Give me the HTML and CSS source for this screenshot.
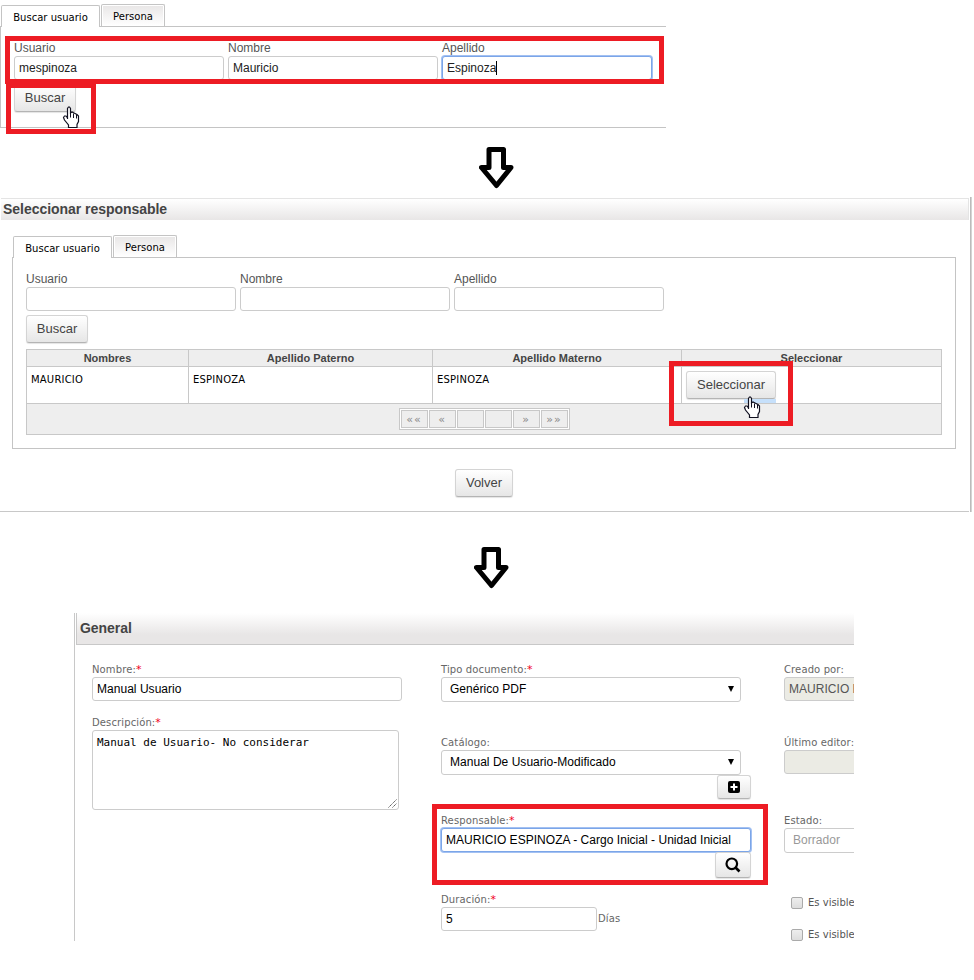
FILE: index.html
```html
<!DOCTYPE html>
<html lang="es">
<head>
<meta charset="utf-8">
<title>Seleccionar responsable</title>
<link rel="stylesheet" href="styles.css">
</head>
<body>
<svg class="defs" width="0" height="0">
  <symbol id="hand" viewBox="0 0 18 23">
    <path d="M5.500 13V2.500L6.500 1H7.500L8.500 2.500V7L10 6L12 7L13 7.500L15 8.500L16.500 10V15.500L15 18.500V21.500H6.500V19L2.500 14L1.500 11.500L2.500 10H4L5.500 12" fill="#fff" stroke="#101020" stroke-width="1.200"/>
    <path d="M8.500 7V11.500M11.500 7.500V12M14.500 8.500V12.500" stroke="#101020" fill="none"/>
  </symbol>
  <symbol id="arrow" viewBox="0 0 36 42">
    <path d="M10 2.500H24.500V20.500H32L17.500 38.500L2.500 20.500H10Z" fill="#fff" stroke="#000" stroke-width="5" stroke-linejoin="round"/>
  </symbol>
</svg>
<main class="page">
  <section class="search">
    <div class="tabs"><div class="tab active">Buscar usuario</div><div class="tab">Persona</div></div>
    <div class="panel">
      <div class="fields">
        <label>Usuario<span class="input">mespinoza</span></label>
        <label>Nombre<span class="input">Mauricio</span></label>
        <label>Apellido<span class="input focus">Espinoza<i class="caret"></i></span></label>
      </div>
      <span class="button">Buscar</span>
    </div>
    <div class="mark mark-fields"></div>
    <div class="mark mark-search"></div>
    <svg class="hand hand-search"><use href="#hand"/></svg>
  </section>
  <svg class="arrow first"><use href="#arrow"/></svg>
  <section class="dialog">
    <h2>Seleccionar responsable</h2>
    <div class="dialog-body">
      <div class="tabs"><div class="tab active">Buscar usuario</div><div class="tab">Persona</div></div>
      <div class="panel">
        <div class="fields">
          <label>Usuario<span class="input"></span></label>
          <label>Nombre<span class="input"></span></label>
          <label>Apellido<span class="input"></span></label>
        </div>
        <span class="button">Buscar</span>
        <div class="table">
          <div class="th">Nombres</div><div class="th">Apellido Paterno</div><div class="th">Apellido Materno</div><div class="th">Seleccionar</div>
          <div class="td">MAURICIO</div><div class="td">ESPINOZA</div><div class="td">ESPINOZA</div><div class="td pick"><span class="button wide">Seleccionar</span></div>
          <div class="foot"><div class="pager"><span>««</span><span>«</span><span></span><span></span><span>»</span><span>»»</span></div></div>
        </div>
      </div>
      <span class="button back">Volver</span>
    </div>
    <div class="glow"></div>
    <div class="mark mark-pick"></div>
    <svg class="hand hand-pick"><use href="#hand"/></svg>
  </section>
  <svg class="arrow second"><use href="#arrow"/></svg>
  <section class="general">
    <h2>General</h2>
    <div class="form">
      <div class="col">
        <div class="field f1"><div class="cap">Nombre:<b>*</b></div><span class="input w310">Manual Usuario</span></div>
        <div class="field"><div class="cap">Descripción:<b>*</b></div><div class="area">Manual de Usuario- No considerar<svg class="grip" viewBox="0 0 9 9"><path d="M0.500 8.500L8.500 0.500M4.500 8.500L8.500 4.500" stroke="#555" stroke-dasharray="1.400 .6"/></svg></div></div>
      </div>
      <div class="col">
        <div class="field f2"><div class="cap">Tipo documento:<b>*</b></div><div class="select">Genérico PDF<i class="tri"></i></div></div>
        <div class="field f3"><div class="cap">Catálogo:</div><div class="select">Manual De Usuario-Modificado<i class="tri"></i></div>
          <span class="button icon plus"><svg width="12" height="12" viewBox="0 0 12 12"><rect width="12" height="12" rx="2"/><path d="M6 2.500V9.500M2.500 6H9.500" stroke="#fff" stroke-width="2"/></svg></span></div>
        <div class="field f4"><div class="cap">Responsable:<b>*</b></div><span class="input focus w310">MAURICIO ESPINOZA - Cargo Inicial - Unidad Inicial</span>
          <span class="button icon lens"><svg width="16" height="16" viewBox="0 0 16 16"><circle cx="6.800" cy="6.800" r="5.300" fill="none" stroke="#000" stroke-width="2.200"/><path d="M10.500 10.500L14.500 14.500" stroke="#000" stroke-width="2.600"/></svg></span></div>
        <div class="field"><div class="cap">Duración:<b>*</b></div><div class="inline"><span class="input w156">5</span><span class="cap unit">Días</span></div></div>
      </div>
      <div class="col last">
        <div class="field g1"><div class="cap">Creado por:</div><span class="input disabled w310">MAURICIO ESPINOZA</span></div>
        <div class="field g2"><div class="cap">Último editor:</div><span class="input disabled w310"></span></div>
        <div class="field g3"><div class="cap">Estado:</div><div class="select muted">Borrador</div></div>
        <div class="check"><i></i>Es visible</div>
        <div class="check"><i></i>Es visible</div>
      </div>
    </div>
    <div class="mark mark-resp"></div>
  </section>
</main>
</body>
</html>
```
FILE: styles.css
```css
* { box-sizing: border-box; }
body { margin: 0; background: #fff; font: 12px/15px "Liberation Sans", Arial, sans-serif; color: #555; }
.defs { position: absolute; }
.page { width: 974px; height: 980px; overflow: hidden; display: flex; flex-direction: column; }
section { position: relative; flex: none; }
.search { width: 666px; height: 143px; padding-top: 4px; }
.tabs { display: flex; align-items: flex-end; gap: 1px; height: 23px; padding-left: 1px; margin-bottom: -1px; position: relative; }
.tab { width: 64px; height: 22px; align-self: flex-start; border: 1px solid #c4c4c4; border-bottom: 0; border-radius: 2px 2px 0 0; box-shadow: inset 0 0 0 1px #fff; background: linear-gradient(#e8e6e6, #fff); color: #000; font: 10px/24px "DejaVu Sans", sans-serif; letter-spacing: .02px; text-align: center; white-space: nowrap; }
.tab.active { width: 99px; height: 22px; align-self: flex-end; background: #fff; }
.panel { border: 1px solid #c4c4c4; padding: 14px 13px 13px; }
.search .panel { border-right: 0; height: 102px; }
.fields { display: flex; gap: 4px; margin-bottom: 4px; }
.fields label { display: block; width: 210px; }
.input { display: block; width: 210px; height: 24px; padding: 0 4px; border: 1px solid #ccc; border-radius: 3px; background: #fff; color: #222; font-size: 12px; line-height: 22px; white-space: nowrap; overflow: hidden; }
.input.focus { border-color: #7ba5e8; box-shadow: 0 0 0 1px #a3c1f2; }
.caret { display: inline-block; width: 1px; height: 14px; background: #000; vertical-align: -3px; }
.button { display: block; width: 62px; height: 28px; border: 1px solid #d4d4d4; border-bottom-color: #b4b4b4; border-radius: 3px; background: linear-gradient(#fff, #e6e6e6); box-shadow: 0 1px 1px #e4e4e4; color: #444; font-size: 13px; line-height: 25px; text-align: center; }
.mark { position: absolute; border: 5px solid #ed1c24; }
.mark-fields { left: 5px; top: 36px; width: 659px; height: 48px; }
.mark-search { left: 6px; top: 83px; width: 90px; height: 51px; }
.hand { position: absolute; width: 18px; height: 23px; }
.hand-search { left: 62px; top: 106px; }
.arrow { display: block; width: 36px; height: 42px; flex: none; }
.arrow.first { margin: 4px 0 0 479px; }
.dialog { width: 974px; height: 315px; margin-top: 8px; padding: 1px 5px 0 1px; }
.dialog::after { content: ""; position: absolute; left: 970px; top: 0; width: 2px; height: 315px; background: linear-gradient(90deg, #bbb 50%, #d4d4d4 50%); }
h2 { margin: 0; color: #444; font-size: 14px; font-weight: bold; letter-spacing: -.04px; }
.dialog h2 { height: 22px; padding-left: 2px; border-top: 1px solid #e4e4e4; border-right: 1px solid #e4e4e4; background: linear-gradient(#fff, #e8e6e6); line-height: 21px; }
.dialog-body { margin-left: -1px; height: 292px; padding: 15px 13px 0 12px; border-bottom: 1px solid #c8c8c8; }
.table { display: grid; grid-template-columns: 162px 244px 249px 260px; grid-template-rows: 17px 37px 31px; margin-top: 6px; width: 916px; border: solid #c8c8c8; border-width: 1px 0 0 1px; }
.table > div { border: solid #c8c8c8; border-width: 0 1px 1px 0; }
.th { background: #eee; color: #444; font-size: 11px; font-weight: bold; line-height: 17px; text-align: center; }
.td { padding: 5px 4px; color: #000; font: 10px/16px "DejaVu Sans", sans-serif; letter-spacing: .2px; }
.td.pick { padding: 4px; letter-spacing: 0; }
.button.wide { width: 90px; font: 13px/25px "Liberation Sans", sans-serif; }
.foot { grid-column: 1 / -1; background: #eee; display: flex; justify-content: center; align-items: center; }
.pager { display: flex; gap: 1px; padding: 1px; border: 1px solid #c8c8c8; background: #fff; }
.pager span { width: 27px; height: 18px; border: 1px solid #c8c8c8; background: #eee; color: #888; font: 11px/17px "DejaVu Sans", sans-serif; letter-spacing: 1px; text-align: center; }
.back { width: 58px; margin: 20px 0 0 443px; }
.glow { position: absolute; left: 744px; top: 202px; width: 32px; height: 4px; background: #c6e0fb; }
.mark-pick { left: 669px; top: 164px; width: 124px; height: 65px; }
.hand-pick { left: 743px; top: 199px; }
.arrow.second { margin: 35px 0 0 474px; }
.general { width: 780px; height: 328px; margin: 24px 0 0 74px; border-left: 1px solid #c8c8c8; }
.general h2 { height: 32px; margin-left: 1px; padding-left: 3px; border-left: 1px solid #c8c8c8; border-bottom: 1px solid #c8c8c8; background: linear-gradient(#fff, #e8e6e6 70%); line-height: 31px; }
.form { display: grid; grid-template-columns: 349px 343px 70px; padding: 18px 0 0 17px; height: 296px; overflow: hidden; }
.col { min-width: 0; }
.last { overflow: hidden; }
.cap { height: 14px; color: #666; font: 10px/14px "DejaVu Sans", sans-serif; letter-spacing: .12px; white-space: nowrap; }
.cap b { color: #f00020; font-weight: normal; font-size: 11px; line-height: 10px; }
.form .input { color: #000; letter-spacing: .03px; }
.w310 { width: 310px; }
.w156 { width: 156px; }
.f1 { height: 53px; }
.f2, .g1 { height: 73px; }
.f3, .g2 { height: 78px; }
.f4 { height: 79px; }
.g3 { height: 82px; }
.area { position: relative; width: 307px; height: 80px; padding: 4px; border: 1px solid #ccc; border-radius: 3px; color: #000; font: 11px/15px "DejaVu Sans Mono", monospace; }
.grip { position: absolute; right: 1px; bottom: 1px; width: 9px; height: 9px; }
.select { display: flex; align-items: center; justify-content: space-between; width: 300px; height: 25px; padding: 0 6px 0 8px; border: 1px solid #ccc; border-radius: 3px; color: #000; font-size: 12px; letter-spacing: .03px; }
.tri { border: solid transparent; border-width: 6px 3px 0; border-top-color: #000; margin-bottom: 2px; }
.muted { color: #999; }
.icon { display: flex; align-items: center; justify-content: center; }
.plus { width: 34px; height: 24px; margin-left: 276px; }
.lens { width: 36px; height: 26px; margin-left: 274px; }
.inline { display: flex; align-items: center; }
.unit { margin-left: 1px; }
.form .disabled { background: #ebebe4; color: #555; letter-spacing: .03px; }
.check { display: flex; align-items: center; height: 14px; margin: 0 0 18px 7px; color: #555; font: 10px/14px "DejaVu Sans", sans-serif; white-space: nowrap; }
.check i { width: 12px; height: 12px; margin-right: 5px; flex: none; border: 1px solid #aaa; border-radius: 2px; background: linear-gradient(#eee, #ddd); }
.mark-resp { left: 357px; top: 191px; width: 336px; height: 81px; }
```
